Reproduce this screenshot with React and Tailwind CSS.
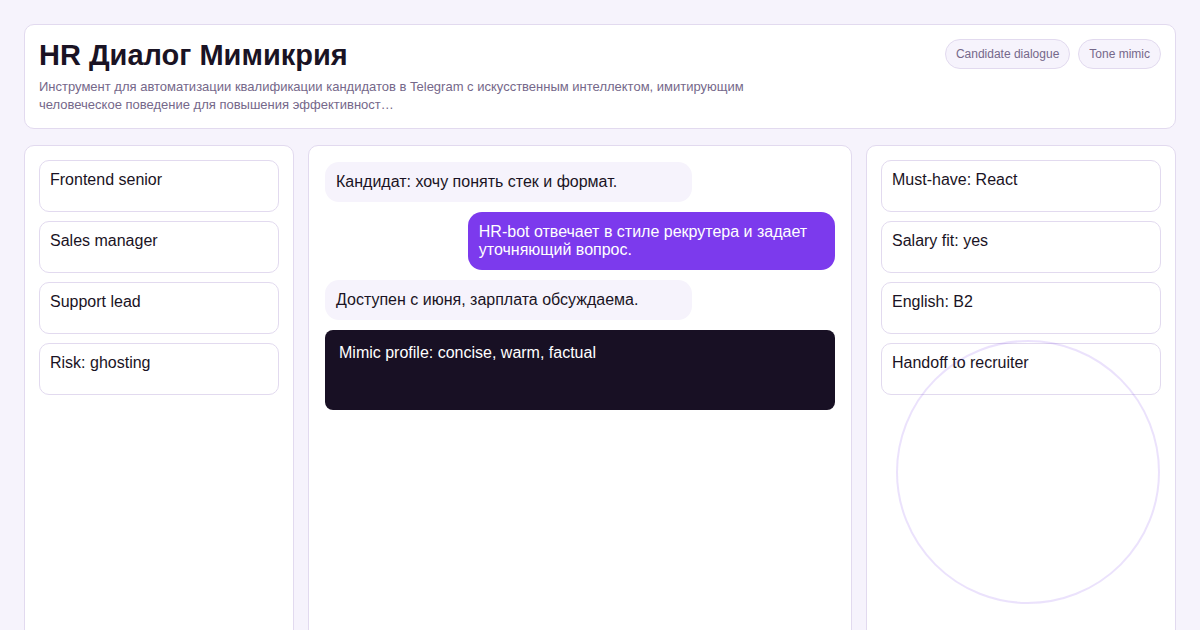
const left = ["Frontend senior", "Sales manager", "Support lead", "Risk: ghosting"];
const right = ["Must-have: React", "Salary fit: yes", "English: B2", "Handoff to recruiter"];

function Card({ children }) {
  return (
    <div className="h-[52px] rounded-[10px] border border-[#e2daef] bg-white px-[10px] pt-[10px] leading-[18px]">
      {children}
    </div>
  );
}

function Bubble({ children, me }) {
  return (
    <div
      className={
        me
          ? "w-[72%] self-end rounded-[14px] bg-[#7c3aed] px-[11px] py-[11px] leading-[18px] text-white"
          : "w-[72%] rounded-[14px] bg-[#f6f3fc] px-[11px] py-[11px] leading-[18px]"
      }
    >
      {children}
    </div>
  );
}

export default function App() {
  return (
    <div className="relative flex h-[630px] w-[1200px] flex-col gap-4 overflow-hidden bg-[#f6f3fc] p-6 font-['Liberation_Sans',sans-serif] text-base text-[#1a1324]">
      <header className="flex h-[105px] shrink-0 items-start justify-between rounded-[10px] border border-[#e2daef] bg-white p-[14px]">
        <div>
          <h1 className="text-[29px] leading-8 font-bold">HR Диалог Мимикрия</h1>
          <p className="mt-[7px] w-[720px] text-[13px] leading-[18px] text-[#75688a]">
            Инструмент для автоматизации квалификации кандидатов в Telegram с искусственным интеллектом, имитирующим человеческое поведение для повышения эффективност…
          </p>
        </div>
        <div className="flex gap-2">
          <span className="h-[30px] rounded-full border border-[#e2daef] bg-[#f6f3fc] px-[10px] text-xs leading-7 text-[#75688a]">Candidate dialogue</span>
          <span className="h-[30px] rounded-full border border-[#e2daef] bg-[#f6f3fc] px-[10px] text-xs leading-7 text-[#75688a]">Tone mimic</span>
        </div>
      </header>
      <main className="grid min-h-0 flex-1 grid-cols-[270px_544px_310px] gap-[14px]">
        <section className="flex h-[520px] flex-col gap-[9px] rounded-[10px] border border-[#e2daef] bg-white p-[14px]">
          {left.map((t) => <Card key={t}>{t}</Card>)}
        </section>
        <section className="flex h-[520px] flex-col gap-[10px] rounded-[10px] border border-[#e2daef] bg-white p-4">
          <Bubble>Кандидат: хочу понять стек и формат.</Bubble>
          <Bubble me>HR-bot отвечает в стиле рекрутера и задает уточняющий вопрос.</Bubble>
          <Bubble>Доступен с июня, зарплата обсуждаема.</Bubble>
          <div className="h-20 rounded-lg bg-[#181024] p-[14px] leading-[18px] text-white">Mimic profile: concise, warm, factual</div>
        </section>
        <section className="flex h-[520px] flex-col gap-[9px] rounded-[10px] border border-[#e2daef] bg-white p-[14px]">
          {right.map((t) => <Card key={t}>{t}</Card>)}
        </section>
      </main>
      <div className="absolute top-[340px] left-[896px] h-[264px] w-[264px] rounded-full border-2 border-[#7c3aed]/15" />
    </div>
  );
}
